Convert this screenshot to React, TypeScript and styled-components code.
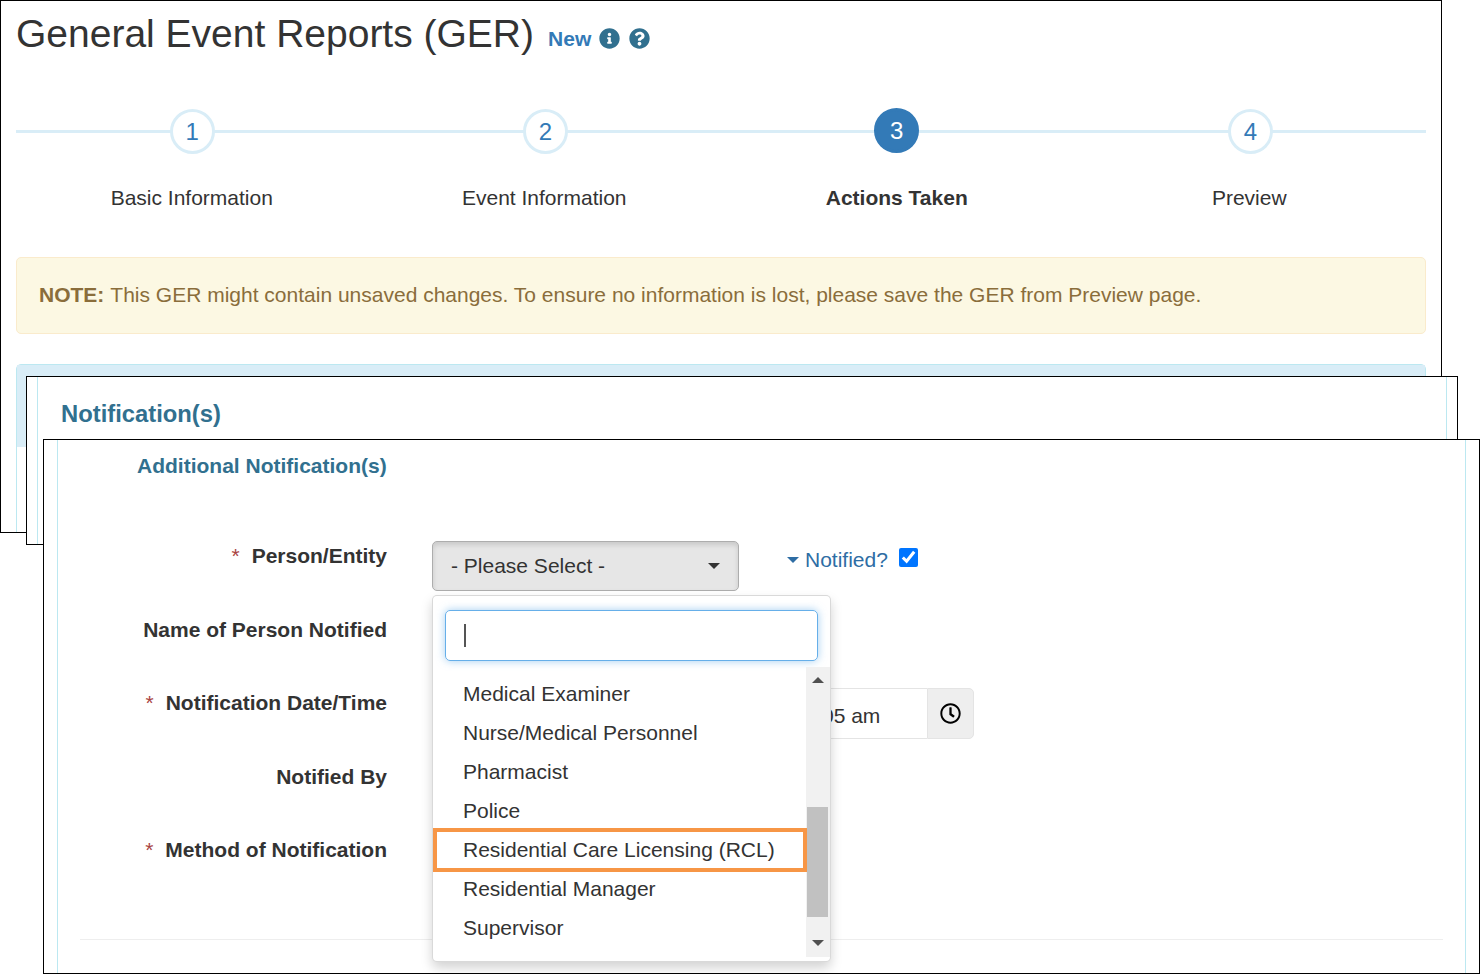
import React from "react";
import styled, { createGlobalStyle } from "styled-components";
import { FaInfoCircle, FaQuestionCircle, FaRegClock } from "react-icons/fa";

const Global = createGlobalStyle`
  html, body { margin: 0; padding: 0; background: #fff; overflow: hidden; }
  * { box-sizing: border-box; }
  body { font-family: "Liberation Sans", Arial, sans-serif; color: #333; font-size: 21px; }
`;

const Desktop = styled.div`
  position: relative;
  width: 1481px;
  height: 975px;
  overflow: hidden;
`;

const Win = styled.section<{ $l: number; $t: number; $w: number; $h: number; $pad: number }>`
  position: absolute;
  left: ${p => p.$l}px;
  top: ${p => p.$t}px;
  width: ${p => p.$w}px;
  height: ${p => p.$h}px;
  border: 1px solid #000;
  background: #fff;
  padding: 0 ${p => p.$pad}px;
  overflow: hidden;
`;

const Main = styled.div`
  padding: 0 15px;
`;

const TitleRow = styled.div`
  display: flex;
  align-items: center;
  height: 64px;
  gap: 14px;
`;

const Title = styled.h1`
  margin: 2px 0 0;
  font-size: 39px;
  font-weight: 400;
  line-height: 62px;
  color: #333;
`;

const NewTag = styled.span`
  display: flex;
  align-items: center;
  gap: 9px;
  margin-top: 11px;
  font-size: 21px;
  font-weight: 700;
  color: #337ab7;
  svg { color: #31708f; width: 21px; height: 21px; }
  svg:first-of-type { margin-left: -1px; }
`;

const Stepper = styled.div`
  position: relative;
  display: grid;
  grid-template-columns: repeat(4, 1fr);
  margin-top: 44px;
  height: 131px;
`;

const StepLine = styled.div`
  position: absolute;
  left: 0;
  right: 0;
  top: 21px;
  height: 3px;
  background: #d9edf7;
`;

const Step = styled.div`
  position: relative;
  display: flex;
  flex-direction: column;
  align-items: center;
`;

const Circle = styled.div<{ $active?: boolean; $even?: boolean }>`
  width: 45px;
  height: 45px;
  border-radius: 50%;
  display: flex;
  align-items: center;
  justify-content: center;
  font-size: 24px;
  margin-left: ${p => (p.$even ? "1.5px" : "0")};
  margin-right: ${p => (p.$active ? "1px" : "0")};
  margin-top: ${p => (p.$active ? "-1px" : "0")};
  margin-bottom: ${p => (p.$active ? "1px" : "0")};
  background: ${p => (p.$active ? "#337ab7" : "#fff")};
  color: ${p => (p.$active ? "#fff" : "#337ab7")};
  border: 3px solid ${p => (p.$active ? "#337ab7" : "#d9edf7")};
`;

const StepLabel = styled.div<{ $active?: boolean }>`
  margin-top: 32px;
  margin-right: 1px;
  font-size: 21px;
  line-height: 24px;
  font-weight: ${p => (p.$active ? 700 : 400)};
  color: #333;
`;

const Alert = styled.div`
  margin-top: 17px;
  height: 77px;
  padding: 0 22px 2px;
  display: flex;
  align-items: center;
  gap: 6px;
  background: #fcf8e3;
  border: 1px solid #faebcc;
  border-radius: 5px;
  font-size: 21px;
  color: #8a6d3b;
`;

const InfoPanel = styled.div`
  margin-top: 30px;
  height: 200px;
  border: 1px solid #bce8f1;
  border-radius: 5px 5px 0 0;
`;

const InfoHead = styled.div`
  height: 82px;
  background: #d9edf7;
`;

const Frame = styled.div`
  height: 100%;
  border-left: 1px solid #bce8f1;
  border-right: 1px solid #bce8f1;
`;

const SectionTitle = styled.h2`
  margin: 0;
  padding: 22px 0 0 23px;
  font-size: 23.8px;
  line-height: 30px;
  font-weight: 700;
  color: #31708f;
`;

const SubTitle = styled.h3`
  margin: 0;
  padding: 13px 0 0 79px;
  height: 101px;
  font-size: 21px;
  line-height: 26px;
  font-weight: 700;
  color: #31708f;
`;

const Row = styled.div`
  display: flex;
  align-items: flex-start;
  height: 73.5px;
`;

const Label = styled.label`
  width: 329px;
  padding-top: 3px;
  text-align: right;
  font-size: 21px;
  line-height: 24px;
  font-weight: 700;
  color: #333;
`;

const Star = styled.span`
  color: #a94442;
  font-weight: 400;
  margin-right: 12px;
`;

const Control = styled.div`
  position: relative;
  margin-left: 45px;
  display: flex;
  align-items: flex-start;
`;

const Select = styled.div`
  width: 307px;
  height: 50px;
  padding: 0 18px;
  display: flex;
  align-items: center;
  justify-content: space-between;
  background: #e6e6e6;
  border: 1px solid #adadad;
  border-radius: 5px;
  box-shadow: inset 0 3px 5px rgba(0, 0, 0, 0.125);
  font-size: 21px;
  color: #333;
`;

const Caret = styled.span<{ $color: string }>`
  display: inline-block;
  width: 0;
  height: 0;
  border-top: 6px solid ${p => p.$color};
  border-left: 6px solid transparent;
  border-right: 6px solid transparent;
`;

const Notified = styled.div`
  margin-left: 48px;
  height: 38px;
  display: flex;
  align-items: center;
  gap: 6px;
  font-size: 21px;
  color: #2e6da4;
`;

const Check = styled.input`
  width: 19px;
  height: 19px;
  margin: -5px 0 0 5px;
`;

const Input = styled.div<{ $w: number }>`
  width: ${p => p.$w}px;
  height: 51px;
  border: 1px solid #ccc;
  border-radius: 5px;
  background: #fff;
`;

const TimeField = styled.div`
  width: 495px;
  height: 51px;
  padding: 5px 0 0 389px;
  display: flex;
  align-items: center;
  border: 1px solid #e4e4e4;
  border-left-color: #ccc;
  border-right: 0;
  border-radius: 5px 0 0 5px;
  font-size: 21px;
  color: #333;
`;

const TimeAddon = styled.div`
  width: 47px;
  height: 51px;
  display: flex;
  align-items: center;
  justify-content: center;
  background: #eee;
  border: 1px solid #e4e4e4;
  border-radius: 0 5px 5px 0;
  color: #000;
  svg { width: 21px; height: 21px; }
`;

const Divider = styled.hr`
  margin: 0 22px;
  border: 0;
  border-top: 1px solid #eee;
  position: relative;
  top: 30px;
`;

const Menu = styled.div`
  position: absolute;
  left: 0;
  top: 54px;
  width: 399px;
  height: 367px;
  background: #fff;
  border: 1px solid rgba(0, 0, 0, 0.15);
  border-radius: 5px;
  box-shadow: 0 6px 12px rgba(0, 0, 0, 0.175);
  z-index: 5;
`;

const Search = styled.div`
  margin: 14px 12px 0;
  height: 51px;
  padding-left: 18px;
  display: flex;
  align-items: center;
  border: 1px solid #66afe9;
  border-radius: 5px;
  box-shadow: 0 0 8px rgba(102, 175, 233, 0.6);
`;

const TextCaret = styled.span`
  display: block;
  width: 2px;
  height: 23px;
  background: #555;
`;

const ListArea = styled.div`
  margin-top: 6px;
  height: 290px;
  display: flex;
`;

const List = styled.ul`
  list-style: none;
  margin: 0;
  padding: 6.5px 0 0;
  flex: 1;
`;

const Item = styled.li<{ $hit?: boolean }>`
  position: relative;
  height: 39px;
  line-height: 39px;
  padding-left: 30px;
  font-size: 21px;
  color: #333;
  &::after {
    content: "";
    display: ${p => (p.$hit ? "block" : "none")};
    position: absolute;
    left: 0;
    right: -1px;
    top: -2px;
    bottom: -3px;
    border: 4px solid #f79646;
  }
`;

const Track = styled.div`
  width: 24px;
  background: #f1f1f1;
  display: flex;
  flex-direction: column;
  align-items: center;
`;

const ArrowUp = styled.span`
  margin-top: 10px;
  width: 0;
  height: 0;
  border-bottom: 6px solid #505050;
  border-left: 6px solid transparent;
  border-right: 6px solid transparent;
`;

const ArrowDown = styled.span`
  margin-top: 23px;
  width: 0;
  height: 0;
  border-top: 6px solid #505050;
  border-left: 6px solid transparent;
  border-right: 6px solid transparent;
`;

const Thumb = styled.div`
  margin-top: 124px;
  align-self: flex-start;
  margin-left: 1px;
  width: 21px;
  height: 110px;
  background: #c1c1c1;
`;

const steps = ["Basic Information", "Event Information", "Actions Taken", "Preview"];
const items = [
  "Medical Examiner",
  "Nurse/Medical Personnel",
  "Pharmacist",
  "Police",
  "Residential Care Licensing (RCL)",
  "Residential Manager",
  "Supervisor",
];

export default function App() {
  return (
    <Desktop>
      <Global />
      <Win $l={0} $t={0} $w={1442} $h={533} $pad={0}>
        <Main>
          <TitleRow>
            <Title>General Event Reports (GER)</Title>
            <NewTag>
              <span>New</span>
              <FaInfoCircle />
              <FaQuestionCircle />
            </NewTag>
          </TitleRow>
          <Stepper>
            <StepLine />
            {steps.map((s, i) => (
              <Step key={s}>
                <Circle $active={i === 2} $even={i % 2 === 1}>{i + 1}</Circle>
                <StepLabel $active={i === 2}>{s}</StepLabel>
              </Step>
            ))}
          </Stepper>
          <Alert>
            <strong>NOTE:</strong>
            <span>This GER might contain unsaved changes. To ensure no information is lost, please save the GER from Preview page.</span>
          </Alert>
          <InfoPanel>
            <InfoHead />
          </InfoPanel>
        </Main>
      </Win>

      <Win $l={26} $t={376} $w={1432} $h={169} $pad={10}>
        <Frame>
          <SectionTitle>Notification(s)</SectionTitle>
        </Frame>
      </Win>

      <Win $l={43} $t={439} $w={1437} $h={535} $pad={13}>
        <Frame>
          <SubTitle>Additional Notification(s)</SubTitle>
          <Row>
            <Label><Star>*</Star>Person/Entity</Label>
            <Control>
              <Select>
                <span>- Please Select -</span>
                <Caret $color="#333" />
              </Select>
              <Notified>
                <Caret $color="#2e6da4" />
                <span>Notified?</span>
                <Check type="checkbox" checked readOnly />
              </Notified>
              <Menu>
                <Search><TextCaret /></Search>
                <ListArea>
                  <List>
                    {items.map((it, i) => (
                      <Item key={it} $hit={i === 4}>{it}</Item>
                    ))}
                  </List>
                  <Track>
                    <ArrowUp />
                    <Thumb />
                    <ArrowDown />
                  </Track>
                </ListArea>
              </Menu>
            </Control>
          </Row>
          <Row>
            <Label>Name of Person Notified</Label>
            <Control><Input $w={300} /></Control>
          </Row>
          <Row>
            <Label><Star>*</Star>Notification Date/Time</Label>
            <Control>
              <TimeField>05 am</TimeField>
              <TimeAddon><FaRegClock /></TimeAddon>
            </Control>
          </Row>
          <Row>
            <Label>Notified By</Label>
            <Control><Input $w={300} /></Control>
          </Row>
          <Row>
            <Label><Star>*</Star>Method of Notification</Label>
            <Control><Input $w={300} /></Control>
          </Row>
          <Divider />
        </Frame>
      </Win>
    </Desktop>
  );
}
